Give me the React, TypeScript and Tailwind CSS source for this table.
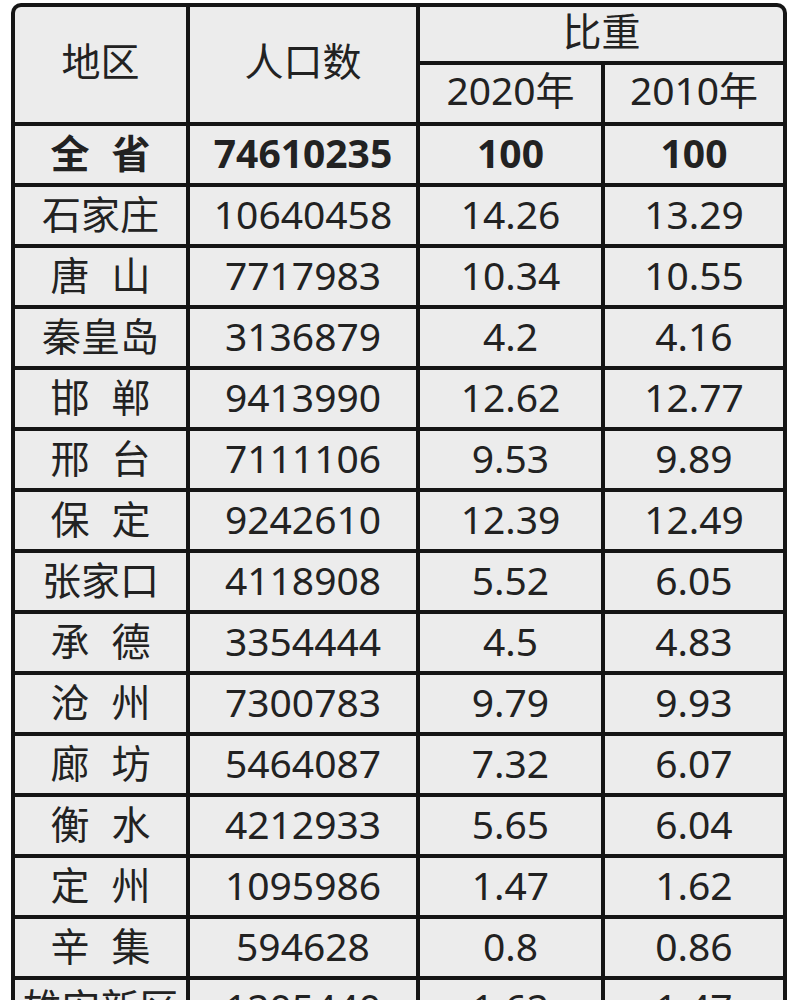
const rows: [string, string, string, string][] = [
    ['石家庄', '10640458', '14.26', '13.29'],
    ['唐山', '7717983', '10.34', '10.55'],
    ['秦皇岛', '3136879', '4.2', '4.16'],
    ['邯郸', '9413990', '12.62', '12.77'],
    ['邢台', '7111106', '9.53', '9.89'],
    ['保定', '9242610', '12.39', '12.49'],
    ['张家口', '4118908', '5.52', '6.05'],
    ['承德', '3354444', '4.5', '4.83'],
    ['沧州', '7300783', '9.79', '9.93'],
    ['廊坊', '5464087', '7.32', '6.07'],
    ['衡水', '4212933', '5.65', '6.04'],
    ['定州', '1095986', '1.47', '1.62'],
    ['辛集', '594628', '0.8', '0.86'],
    ['雄安新区', '1205440', '1.62', '1.47'],
];

const cell = 'bg-[#ececec] flex items-center justify-center h-[57px] pb-[4px]';
const head = 'bg-[#ececec] flex items-center justify-center pb-[8px]';

// two-character names get spread out like the spreadsheet does
const Name = ({ name }: { name: string }) =>
    name.length === 2 ? (
        <span className="flex gap-[22px]">
            <span>{name[0]}</span>
            <span>{name[1]}</span>
        </span>
    ) : (
        <span>{name}</span>
    );

const App = () => {
    return (
        <div className="h-[1000px] overflow-hidden bg-white pt-[3px] pl-[11px]">
            <div
                className="w-[776px] grid grid-cols-[171px_226px_181px_178px] gap-[4px] p-[4px] bg-[#151515] rounded-t-[10px] text-[39px] leading-none text-[#222]"
                style={{ fontFamily: '"Noto Sans", "Noto Sans CJK SC", sans-serif' }}
            >
                {/* Header */}
                <div className={`${head} row-span-2 rounded-tl-[6px]`}>地区</div>
                <div className={`${head} row-span-2`}>人口数</div>
                <div className={`${head} col-span-2 h-[54px] rounded-tr-[6px]`}>比重</div>
                <div className={`${head} h-[57px]`}>2020年</div>
                <div className={`${head} h-[57px]`}>2010年</div>

                {/* Province total */}
                <div className={`${cell} font-bold`}>
                    <Name name="全省" />
                </div>
                <div className={`${cell} font-bold`}>74610235</div>
                <div className={`${cell} font-bold`}>100</div>
                <div className={`${cell} font-bold`}>100</div>

                {rows.map(([name, pop, a, b]) => (
                    <div key={name} className="contents">
                        <div className={cell}>
                            <Name name={name} />
                        </div>
                        <div className={cell}>{pop}</div>
                        <div className={cell}>{a}</div>
                        <div className={cell}>{b}</div>
                    </div>
                ))}
            </div>
        </div>
    );
};

export default App;
